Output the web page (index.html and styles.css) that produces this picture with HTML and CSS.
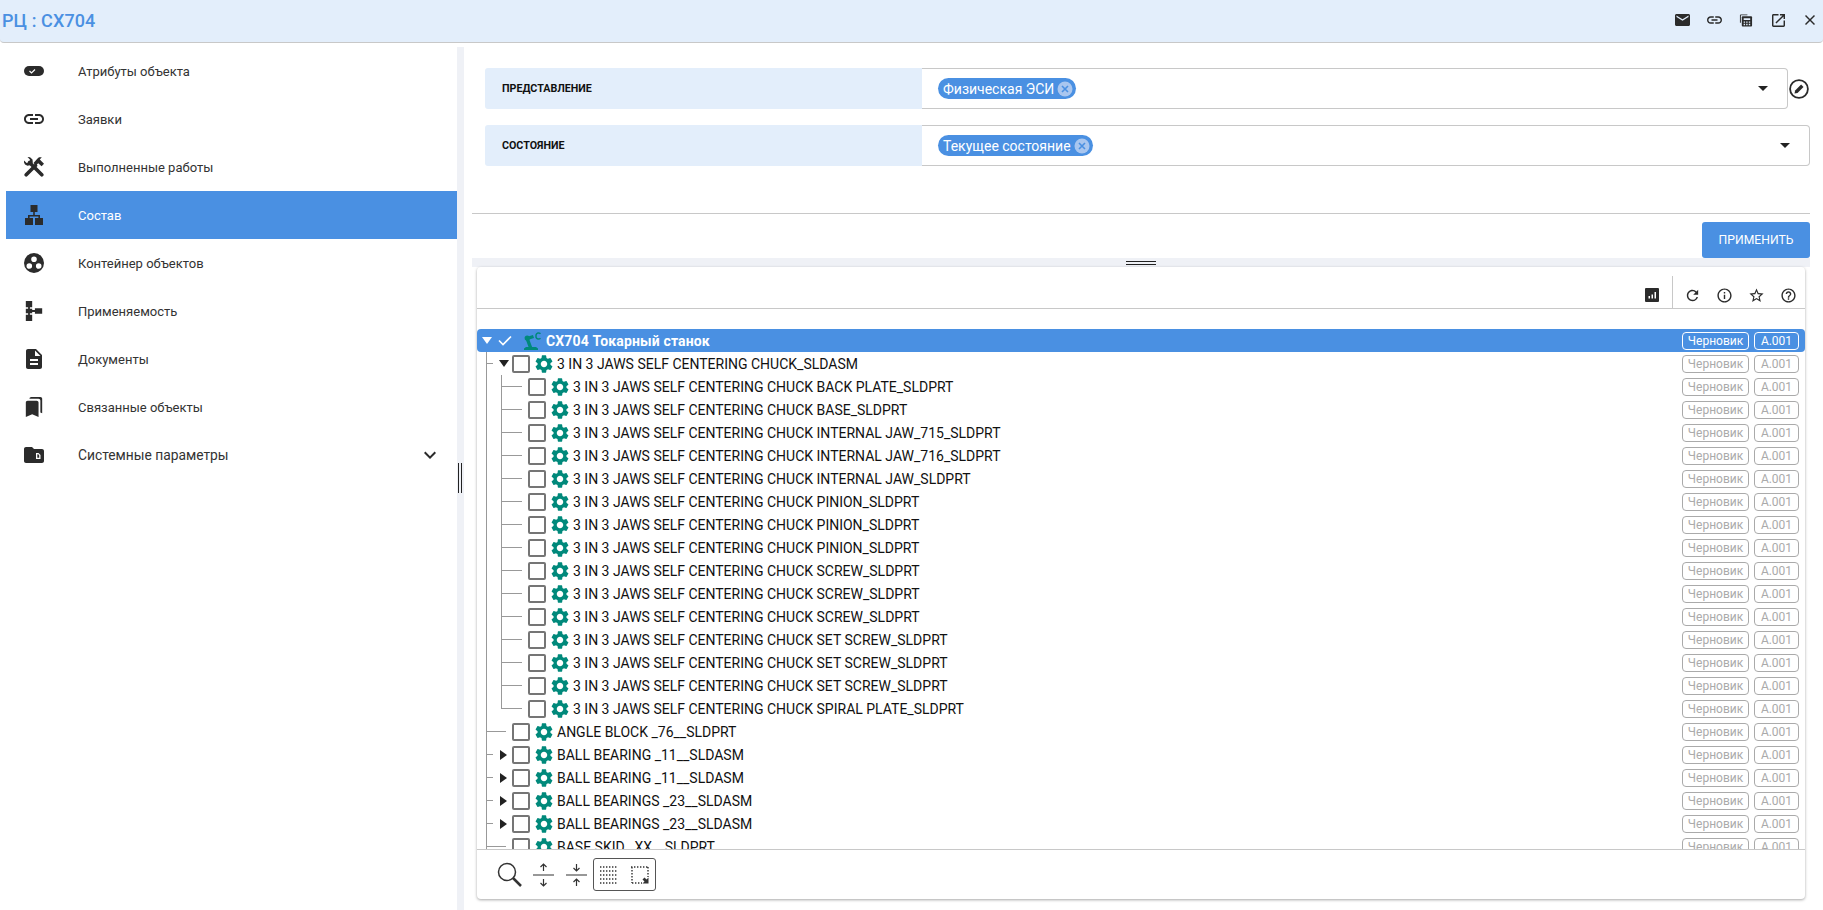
FILE: index.html
```html
<!DOCTYPE html>
<html lang="ru">
<head>
<meta charset="utf-8">
<title>РЦ : CX704</title>
<link rel="stylesheet" href="styles.css">
</head>
<body>
<svg class="defs" width="0" height="0">
<symbol id="gear" viewBox="2 2 20 20"><path d="M19.14 12.94c.04-.3.06-.61.06-.94 0-.32-.02-.64-.07-.94l2.03-1.58a.49.49 0 0 0 .12-.61l-1.92-3.32a.488.488 0 0 0-.59-.22l-2.39.96c-.5-.38-1.03-.7-1.62-.94l-.36-2.54a.484.484 0 0 0-.48-.41h-3.84c-.24 0-.43.17-.47.41l-.36 2.54c-.59.24-1.13.57-1.62.94l-2.39-.96c-.22-.08-.47 0-.59.22L2.74 8.87c-.12.21-.08.47.12.61l2.03 1.58c-.05.3-.09.63-.09.94s.02.64.07.94l-2.03 1.58a.49.49 0 0 0-.12.61l1.92 3.32c.12.22.37.29.59.22l2.39-.96c.5.38 1.03.7 1.62.94l.36 2.54c.05.24.24.41.48.41h3.84c.24 0 .44-.17.47-.41l.36-2.54c.59-.24 1.13-.56 1.62-.94l2.39.96c.22.08.47 0 .59-.22l1.92-3.32c.12-.22.07-.47-.12-.61l-2.01-1.58zM12 15.6c-1.98 0-3.6-1.62-3.6-3.6s1.62-3.6 3.6-3.6 3.6 1.62 3.6 3.6-1.62 3.6-3.6 3.6z"/></symbol>
<symbol id="close-x" viewBox="0 0 16 16"><circle cx="8" cy="8" r="7.5" fill="#a9c6ef"/><path d="M5 5l6 6M11 5l-6 6" stroke="#4a90e2" stroke-width="1.6" fill="none"/></symbol>
</svg>
<header class="topbar">
  <div class="title">РЦ : CX704</div>
  <div class="top-icons">
    <svg class="ti ti-mail" viewBox="2 4 20 16"><path d="M20 4H4c-1.1 0-2 .9-2 2v12c0 1.1.9 2 2 2h16c1.1 0 2-.9 2-2V6c0-1.1-.9-2-2-2zm0 4l-8 5-8-5V6l8 5 8-5v2z"/></svg>
    <svg class="ti ti-link" viewBox="2 7 20 10"><path d="M3.9 12c0-1.71 1.39-3.1 3.1-3.1h4V7H7c-2.76 0-5 2.24-5 5s2.24 5 5 5h4v-1.9H7c-1.71 0-3.1-1.39-3.1-3.1zM8 13h8v-2H8v2zm9-6h-4v1.9h4c1.71 0 3.1 1.39 3.1 3.1s-1.39 3.1-3.1 3.1h-4V17h4c2.76 0 5-2.24 5-5s-2.24-5-5-5z"/></svg>
    <svg class="ti ti-calc" viewBox="0 0 15 14"><path d="M1 10V2a1 1 0 0 1 1-1h7v1H2v8z"/><path d="M4 14a1 1 0 0 1-1-1V4a1 1 0 0 1 1-1h9a1 1 0 0 1 1 1v9a1 1 0 0 1-1 1z"/><path d="M5 5h7v2H5zM5 8.500h1.500V10H5zM7.700 8.500h1.500V10H7.700zM10.500 8.500H12V10h-1.500zM5 11h1.500v1.500H5zM7.700 11h1.500v1.500H7.700zM10.500 11H12v1.500h-1.500z" fill="#e3eefb"/></svg>
    <svg class="ti ti-ext" viewBox="3 3 18 18"><path d="M19 19H5V5h7V3H5c-1.110 0-2 .9-2 2v14c0 1.100.89 2 2 2h14c1.100 0 2-.9 2-2v-7h-2v7zM14 3v2h3.590l-9.830 9.830 1.410 1.410L19 6.410V10h2V3h-7z"/></svg>
    <svg class="ti ti-close" viewBox="5 5 14 14"><path d="M19 6.410L17.590 5 12 10.590 6.410 5 5 6.410 10.590 12 5 17.590 6.410 19 12 13.410 17.590 19 19 17.590 13.410 12z"/></svg>
  </div>
</header>
<main class="layout">
  <aside class="sidebar">
    <nav class="nav">
      <a class="item"><span class="ic"><svg viewBox="0 0 20 10" class="i20"><rect x="0" y="0" width="20" height="10" rx="5"/><path d="M5.500 5l2 2 3.500-3.500" stroke="#fff" stroke-width="1.200" fill="none"/></svg></span><span class="lbl">Атрибуты объекта</span></a>
      <a class="item"><span class="ic"><svg viewBox="2 7 20 10" class="i20"><path d="M3.900 12c0-1.710 1.390-3.100 3.100-3.100h4V7H7c-2.760 0-5 2.240-5 5s2.240 5 5 5h4v-1.900H7c-1.710 0-3.100-1.390-3.100-3.100zM8 13h8v-2H8v2zm9-6h-4v1.900h4c1.710 0 3.100 1.390 3.100 3.100s-1.390 3.100-3.100 3.100h-4V17h4c2.760 0 5-2.240 5-5s-2.240-5-5-5z"/></svg></span><span class="lbl">Заявки</span></a>
      <a class="item"><span class="ic"><svg viewBox="0 0 20 20" class="i20"><path d="M17.800 17.800L5.500 5.500M2.200 17.800L11.500 8.500" fill="none" stroke="#2b2b2b" stroke-width="3.600" stroke-linecap="round"/><path d="M0 3.500L2.700 6.100 4.400 5.800 5.800 4.400 6.100 2.700 3.500 0 6 .2 8.500 2.500 8.800 5.500 7 8 3.500 8.800 1 7.500 0 5.500z"/><path d="M9.500 6L13.300 1.700 15 .2 17.800 .2 15.800 2.600 20 6.800 17.600 9.200 14.200 6.200 11.800 8.600z"/></svg></span><span class="lbl">Выполненные работы</span></a>
      <a class="item active"><span class="ic"><svg viewBox="0 0 18 20" class="i20"><path d="M5.500 0h7v7h-7zM8.200 7h1.600v3H8.200zM3 10h12v3h-1.600v-1.400H4.600V13H3zM0 13h8v7H0zM10 13h8v7h-8z"/></svg></span><span class="lbl">Состав</span></a>
      <a class="item"><span class="ic"><svg viewBox="0 0 20 20" class="i20"><path fill-rule="evenodd" d="M10 0a10 10 0 1 0 0 20a10 10 0 0 0 0-20zM10 3.500a2.800 2.800 0 1 1 0 5.600a2.800 2.800 0 0 1 0-5.600zM5.300 10.200a2.800 2.800 0 1 1 0 5.600a2.800 2.800 0 0 1 0-5.600zM14.700 10.200a2.800 2.800 0 1 1 0 5.600a2.800 2.800 0 0 1 0-5.600z"/></svg></span><span class="lbl">Контейнер объектов</span></a>
      <a class="item"><span class="ic"><svg viewBox="0 0 18 22" class="i20"><path d="M0 0h7v7H0zM0 15h7v7H0zM2.500 7h2v8h-2zM0 8.500h7v5H0zM7 10h3v2H7zM10 8h8v6h-8z"/></svg></span><span class="lbl">Применяемость</span></a>
      <a class="item"><span class="ic"><svg viewBox="4 2 16 20" class="i20"><path d="M14 2H6c-1.100 0-1.990.9-1.990 2L4 20c0 1.100.89 2 1.990 2H18c1.100 0 2-.9 2-2V8l-6-6zm2 16H8v-2h8v2zm0-4H8v-2h8v2zm-3-5V3.500L18.500 9H13z"/></svg></span><span class="lbl">Документы</span></a>
      <a class="item"><span class="ic"><svg viewBox="3 1 18 22" class="i20"><path d="M19 18l2 1V3c0-1.100-.9-2-2-2H8.990C7.890 1 7 1.900 7 3h10c1.100 0 2 .9 2 2v13zM15 5H5c-1.100 0-2 .9-2 2v16l7-3 7 3V7c0-1.100-.9-2-2-2z"/></svg></span><span class="lbl">Связанные объекты</span></a>
      <a class="item"><span class="ic"><svg viewBox="2 4 20 16" class="i20"><path d="M10 4H4c-1.100 0-1.990.9-1.990 2L2 18c0 1.100.9 2 2 2h16c1.100 0 2-.9 2-2V8c0-1.100-.9-2-2-2h-8l-2-2z"/><path fill-rule="evenodd" fill="#fff" d="M14 10h2.500l2 2v4H14zM15.300 11.300v3.400h1.900v-2.300l-.9-1.100z"/></svg></span><span class="lbl lbl-lg">Системные параметры</span><svg class="chev" viewBox="6 8 12 8"><path d="M16.590 8.590L12 13.170 7.410 8.590 6 10l6 6 6-6z"/></svg></a>
    </nav>
    <div class="side-gutter"><span class="v-handle"></span></div>
  </aside>
  <section class="content">
    <div class="form-row">
      <div class="f-label">ПРЕДСТАВЛЕНИЕ</div>
      <div class="f-select"><span class="chip">Физическая ЭСИ<svg class="chip-x"><use href="#close-x"/></svg></span><span class="caret"></span></div>
      <div class="f-side"><svg viewBox="0 0 20 20" class="pencil"><circle cx="10" cy="10" r="8.900" fill="none" stroke="#2b2b2b" stroke-width="1.800"/><path d="M5.500 14.500l.6-3 6-6 2.400 2.400-6 6z"/></svg></div>
    </div>
    <div class="form-row">
      <div class="f-label">СОСТОЯНИЕ</div>
      <div class="f-select"><span class="chip">Текущее состояние<svg class="chip-x"><use href="#close-x"/></svg></span><span class="caret"></span></div>
    </div>
    <hr class="rule">
    <div class="actions"><button class="apply">ПРИМЕНИТЬ</button></div>
    <div class="h-gutter"><span class="h-handle"></span></div>
    <div class="card">
      <div class="toolbar">
        <svg class="tb chart" viewBox="0 0 14 14"><path fill-rule="evenodd" d="M1 0h12a1 1 0 0 1 1 1v12a1 1 0 0 1-1 1H1a1 1 0 0 1-1-1V1a1 1 0 0 1 1-1zM3.500 8v2.500h1.500V8zM6.500 6.500v4H8v-4zM9.500 4v6.500H11V4z"/></svg>
        <span class="tb-sep"></span>
        <svg class="tb" viewBox="0 0 24 24"><path d="M17.650 6.350A7.958 7.958 0 0 0 12 4c-4.420 0-7.990 3.580-7.990 8s3.570 8 7.990 8c3.730 0 6.840-2.550 7.730-6h-2.080A5.990 5.990 0 0 1 12 18c-3.310 0-6-2.690-6-6s2.690-6 6-6c1.660 0 3.140.69 4.220 1.780L13 11h7V4l-2.350 2.350z"/></svg>
        <svg class="tb" viewBox="0 0 24 24"><path d="M11 7h2v2h-2zm0 4h2v6h-2zm1-9C6.480 2 2 6.480 2 12s4.480 10 10 10 10-4.480 10-10S17.520 2 12 2zm0 18c-4.410 0-8-3.590-8-8s3.590-8 8-8 8 3.590 8 8-3.590 8-8 8z"/></svg>
        <svg class="tb" viewBox="0 0 24 24"><path d="M22 9.240l-7.190-.62L12 2 9.190 8.630 2 9.240l5.460 4.730L5.820 21 12 17.270 18.180 21l-1.630-7.030L22 9.240zM12 15.400l-3.760 2.270 1-4.280-3.320-2.880 4.380-.38L12 6.100l1.710 4.040 4.380.38-3.320 2.880 1 4.280L12 15.400z"/></svg>
        <svg class="tb" viewBox="0 0 24 24"><path d="M11 18h2v-2h-2v2zm1-16C6.480 2 2 6.480 2 12s4.480 10 10 10 10-4.480 10-10S17.520 2 12 2zm0 18c-4.410 0-8-3.590-8-8s3.590-8 8-8 8 3.590 8 8-3.590 8-8 8zm0-14c-2.210 0-4 1.790-4 4h2c0-1.100.9-2 2-2s2 .9 2 2c0 2-3 1.750-3 5h2c0-2.250 3-2.500 3-5 0-2.210-1.790-4-4-4z"/></svg>
      </div>
      <div class="tree">
        <div class="row root">
          <span class="tog open white"></span>
          <svg class="chk" viewBox="0 0 14 11"><path d="M1 5.500l4 4 8-8" fill="none" stroke="#fff" stroke-width="1.600"/></svg>
          <svg class="robot" viewBox="0 0 17 18"><path d="M0 18v-1.500l2-1.500h10l2 1.500V18z" fill="#00897b"/><path d="M6.500 15.500L3.200 6.500L9.500 4.500" fill="none" stroke="#00897b" stroke-width="3.400"/><circle cx="3.200" cy="6" r="2.600" fill="#00897b"/><path d="M16.500 1.700a2.700 2.700 0 0 0-4.500 1.300v2.200a2.700 2.700 0 0 0 4.500 1.100" fill="none" stroke="#00897b" stroke-width="1.500"/></svg>
          <span class="name">CX704 Токарный станок</span>
          <span class="badge">Черновик</span><span class="badge ver">А.001</span>
        </div>
        <div class="row"><span class="g1 short"></span><span class="tog open"></span><span class="cb"></span><svg class="gear"><use href="#gear"/></svg><span class="name">3 IN 3 JAWS SELF CENTERING CHUCK_SLDASM</span><span class="badge">Черновик</span><span class="badge ver">А.001</span></div>
        <div class="row"><span class="g0"></span><span class="g2"></span><span class="cb"></span><svg class="gear"><use href="#gear"/></svg><span class="name">3 IN 3 JAWS SELF CENTERING CHUCK BACK PLATE_SLDPRT</span><span class="badge">Черновик</span><span class="badge ver">А.001</span></div>
        <div class="row"><span class="g0"></span><span class="g2"></span><span class="cb"></span><svg class="gear"><use href="#gear"/></svg><span class="name">3 IN 3 JAWS SELF CENTERING CHUCK BASE_SLDPRT</span><span class="badge">Черновик</span><span class="badge ver">А.001</span></div>
        <div class="row"><span class="g0"></span><span class="g2"></span><span class="cb"></span><svg class="gear"><use href="#gear"/></svg><span class="name">3 IN 3 JAWS SELF CENTERING CHUCK INTERNAL JAW_715_SLDPRT</span><span class="badge">Черновик</span><span class="badge ver">А.001</span></div>
        <div class="row"><span class="g0"></span><span class="g2"></span><span class="cb"></span><svg class="gear"><use href="#gear"/></svg><span class="name">3 IN 3 JAWS SELF CENTERING CHUCK INTERNAL JAW_716_SLDPRT</span><span class="badge">Черновик</span><span class="badge ver">А.001</span></div>
        <div class="row"><span class="g0"></span><span class="g2"></span><span class="cb"></span><svg class="gear"><use href="#gear"/></svg><span class="name">3 IN 3 JAWS SELF CENTERING CHUCK INTERNAL JAW_SLDPRT</span><span class="badge">Черновик</span><span class="badge ver">А.001</span></div>
        <div class="row"><span class="g0"></span><span class="g2"></span><span class="cb"></span><svg class="gear"><use href="#gear"/></svg><span class="name">3 IN 3 JAWS SELF CENTERING CHUCK PINION_SLDPRT</span><span class="badge">Черновик</span><span class="badge ver">А.001</span></div>
        <div class="row"><span class="g0"></span><span class="g2"></span><span class="cb"></span><svg class="gear"><use href="#gear"/></svg><span class="name">3 IN 3 JAWS SELF CENTERING CHUCK PINION_SLDPRT</span><span class="badge">Черновик</span><span class="badge ver">А.001</span></div>
        <div class="row"><span class="g0"></span><span class="g2"></span><span class="cb"></span><svg class="gear"><use href="#gear"/></svg><span class="name">3 IN 3 JAWS SELF CENTERING CHUCK PINION_SLDPRT</span><span class="badge">Черновик</span><span class="badge ver">А.001</span></div>
        <div class="row"><span class="g0"></span><span class="g2"></span><span class="cb"></span><svg class="gear"><use href="#gear"/></svg><span class="name">3 IN 3 JAWS SELF CENTERING CHUCK SCREW_SLDPRT</span><span class="badge">Черновик</span><span class="badge ver">А.001</span></div>
        <div class="row"><span class="g0"></span><span class="g2"></span><span class="cb"></span><svg class="gear"><use href="#gear"/></svg><span class="name">3 IN 3 JAWS SELF CENTERING CHUCK SCREW_SLDPRT</span><span class="badge">Черновик</span><span class="badge ver">А.001</span></div>
        <div class="row"><span class="g0"></span><span class="g2"></span><span class="cb"></span><svg class="gear"><use href="#gear"/></svg><span class="name">3 IN 3 JAWS SELF CENTERING CHUCK SCREW_SLDPRT</span><span class="badge">Черновик</span><span class="badge ver">А.001</span></div>
        <div class="row"><span class="g0"></span><span class="g2"></span><span class="cb"></span><svg class="gear"><use href="#gear"/></svg><span class="name">3 IN 3 JAWS SELF CENTERING CHUCK SET SCREW_SLDPRT</span><span class="badge">Черновик</span><span class="badge ver">А.001</span></div>
        <div class="row"><span class="g0"></span><span class="g2"></span><span class="cb"></span><svg class="gear"><use href="#gear"/></svg><span class="name">3 IN 3 JAWS SELF CENTERING CHUCK SET SCREW_SLDPRT</span><span class="badge">Черновик</span><span class="badge ver">А.001</span></div>
        <div class="row"><span class="g0"></span><span class="g2"></span><span class="cb"></span><svg class="gear"><use href="#gear"/></svg><span class="name">3 IN 3 JAWS SELF CENTERING CHUCK SET SCREW_SLDPRT</span><span class="badge">Черновик</span><span class="badge ver">А.001</span></div>
        <div class="row"><span class="g0"></span><span class="g2 last"></span><span class="cb"></span><svg class="gear"><use href="#gear"/></svg><span class="name">3 IN 3 JAWS SELF CENTERING CHUCK SPIRAL PLATE_SLDPRT</span><span class="badge">Черновик</span><span class="badge ver">А.001</span></div>
        <div class="row"><span class="g1 long"></span><span class="cb"></span><svg class="gear"><use href="#gear"/></svg><span class="name">ANGLE BLOCK _76__SLDPRT</span><span class="badge">Черновик</span><span class="badge ver">А.001</span></div>
        <div class="row"><span class="g1 short"></span><span class="tog"></span><span class="cb"></span><svg class="gear"><use href="#gear"/></svg><span class="name">BALL BEARING _11__SLDASM</span><span class="badge">Черновик</span><span class="badge ver">А.001</span></div>
        <div class="row"><span class="g1 short"></span><span class="tog"></span><span class="cb"></span><svg class="gear"><use href="#gear"/></svg><span class="name">BALL BEARING _11__SLDASM</span><span class="badge">Черновик</span><span class="badge ver">А.001</span></div>
        <div class="row"><span class="g1 short"></span><span class="tog"></span><span class="cb"></span><svg class="gear"><use href="#gear"/></svg><span class="name">BALL BEARINGS _23__SLDASM</span><span class="badge">Черновик</span><span class="badge ver">А.001</span></div>
        <div class="row"><span class="g1 short"></span><span class="tog"></span><span class="cb"></span><svg class="gear"><use href="#gear"/></svg><span class="name">BALL BEARINGS _23__SLDASM</span><span class="badge">Черновик</span><span class="badge ver">А.001</span></div>
        <div class="row"><span class="g1 long"></span><span class="cb"></span><svg class="gear"><use href="#gear"/></svg><span class="name">BASE SKID _XX__SLDPRT</span><span class="badge">Черновик</span><span class="badge ver">А.001</span></div>
      </div>
      <div class="footer">
        <svg class="f-search" viewBox="0 0 25 25"><circle cx="10" cy="10" r="8.500" fill="none" stroke="#333" stroke-width="1.500"/><path d="M16 16l8 8" stroke="#333" stroke-width="2.500"/></svg>
        <svg class="f-arrows" viewBox="0 0 21 24"><path d="M0 12h21M10.500 1v7M10.500 16v7M7.500 4l3-3 3 3M7.500 20l3 3 3-3" fill="none" stroke="#333" stroke-width="1.200"/></svg>
        <svg class="f-arrows" viewBox="0 0 21 24"><path d="M0 12h21M10.500 1v7M10.500 16v7M7.500 5l3 3 3-3M7.500 19l3-3 3 3" fill="none" stroke="#333" stroke-width="1.200"/></svg>
        <div class="f-box">
          <svg class="f-sel" viewBox="0 0 18 18"><path d="M0 1h18M0 5h18M0 9h18M0 13h18M0 17h18" fill="none" stroke="#333" stroke-width="1.400" stroke-dasharray="1.400 1.600"/></svg>
          <svg class="f-sel" viewBox="0 0 18 18"><path d="M0 1h18M17 1v10M1 1v16M1 17h10" fill="none" stroke="#333" stroke-width="1.400" stroke-dasharray="1.400 1.600"/><path d="M17.500 11.500v6h-6l2-2-2-2 2-2 2 2z" fill="#333"/></svg>
        </div>
      </div>
    </div>
  </section>
</main>
</body>
</html>
```
FILE: styles.css
```css
* { box-sizing: border-box; }
html, body { margin: 0; height: 100%; overflow: hidden; }
body { width: 1823px; height: 910px; background: #fff; font-family: Roboto, "Liberation Sans", sans-serif; color: #333; display: flex; flex-direction: column; }
.defs { position: absolute; }

.topbar { height: 43px; flex: none; background: #e3eefb; border-bottom: 1px solid #c8c8c8; border-radius: 0 0 4px 4px; display: flex; align-items: center; justify-content: space-between; padding: 0 8px 2px 2px; }
.title { font-size: 18px; font-weight: 500; color: #4a90e2; letter-spacing: .1px; }
.top-icons { display: flex; align-items: center; }
.ti { fill: #2b2b2b; display: block; flex: none; }
.ti-mail { width: 15px; height: 12px; margin-right: 17px; }
.ti-link { width: 15px; height: 8px; margin-right: 17px; }
.ti-calc { width: 14px; height: 14px; margin-right: 19px; }
.ti-ext { width: 13px; height: 13px; margin-right: 20px; }
.ti-close { width: 10px; height: 10px; }

.layout { flex: 1; display: flex; min-height: 0; }
.sidebar { width: 464px; flex: none; display: flex; padding-left: 6px; position: relative; }
.nav { width: 451px; flex: none; padding-top: 4px; }
.item { display: flex; align-items: center; height: 48px; color: #333; }
.item.active { background: #4a90e2; color: #fff; }
.ic { width: 72px; flex: none; display: flex; padding-left: 18px; }
.i20 { width: 20px; height: 20px; fill: #2b2b2b; display: block; }
.lbl { font-size: 13px; flex: 1; }
.lbl-lg { font-size: 13.8px; }
.chev { width: 12px; height: 8px; fill: #2b2b2b; margin-right: 21px; }
.side-gutter { width: 7px; margin-top: 4px; background: #eff1f6; position: relative; }
.v-handle { position: absolute; left: 1px; top: 416px; width: 4px; height: 30px; border-left: 1px solid #222; border-right: 1px solid #222; }

.content { flex: 1; min-width: 0; padding: 25px 13px 11px 8px; display: flex; flex-direction: column; }
.form-row { display: flex; height: 41px; margin-bottom: 16px; padding-left: 13px; flex: none; }
.form-row + .form-row { margin-bottom: 0; }
.f-label { width: 437px; flex: none; background: #e3eefb; border-radius: 3px 0 0 3px; display: flex; align-items: center; padding-left: 17px; font-size: 10.7px; font-weight: 700; color: #111; }
.f-select { flex: 1; border: 1px solid #c8c8c8; border-left: 0; border-radius: 0 4px 4px 0; display: flex; align-items: center; justify-content: space-between; padding: 0 19px 0 16px; }
.chip { height: 21px; background: #4a90e2; color: #fff; border-radius: 11px; display: inline-flex; align-items: center; font-size: 14px; padding: 0 3px 0 5px; gap: 3px; }
.chip-x { width: 16px; height: 16px; }
.caret { width: 0; height: 0; border-left: 5px solid transparent; border-right: 5px solid transparent; border-top: 5px solid #222; }
.f-side { width: 22px; flex: none; display: flex; align-items: center; justify-content: flex-end; padding-right: 1px; }
.pencil { width: 20px; height: 20px; fill: #2b2b2b; display: block; }
.rule { margin: 47px 0 0; border: 0; border-top: 1px solid #c8c8c8; flex: none; }
.actions { display: flex; justify-content: flex-end; padding-top: 8px; flex: none; }
.apply { width: 108px; height: 36px; background: #4a90e2; color: #fff; border: 0; border-radius: 3px; font: 400 12.2px Roboto, sans-serif; }
.h-gutter { height: 9px; background: #eff1f6; flex: none; display: flex; align-items: center; justify-content: center; }
.h-handle { width: 30px; height: 4px; border-top: 1px solid #222; border-bottom: 1px solid #222; }

.card { flex: 1; min-height: 0; margin: 0 5px; background: #fff; border-radius: 4px; box-shadow: 0 1px 3px rgba(0,0,0,.35); display: flex; flex-direction: column; }
.toolbar { height: 42px; flex: none; border-bottom: 1px solid #c8c8c8; display: flex; align-items: flex-end; justify-content: flex-end; padding: 9px 8px 0 0; gap: 15px; }
.tb { width: 17px; height: 17px; fill: #2b2b2b; margin-bottom: 4px; flex: none; }
.tb.chart { width: 14px; height: 14px; margin-bottom: 6px; }
.tb-sep { width: 1px; height: 32px; background: #c8c8c8; margin: 0 -4px 0 -2px; }

.tree { flex: 1; min-height: 0; overflow: hidden; padding-top: 20px; }
.row { height: 23px; display: flex; align-items: center; font-size: 14px; color: #111; padding-right: 6px; }
.row.root { background: #4a90e2; color: #fff; font-weight: 700; letter-spacing: .15px; border-radius: 4px; padding-left: 4px; }
.row.root .badge { color: #fff; border-color: #fff; font-weight: 400; letter-spacing: 0; }
.name { flex: 1; white-space: nowrap; }
.badge { height: 18px; width: 67px; flex: none; border: 1px solid #aaa; border-radius: 4px; color: #aaa; font-size: 12px; display: flex; align-items: center; justify-content: center; }
.badge.ver { width: 45px; margin-left: 5px; }
.g0, .g1, .g2 { height: 23px; flex: none; display: block; background-repeat: no-repeat; }
.g0 { width: 15px; margin-left: 9px; background: linear-gradient(#999, #999) 0 0 / 1px 100% no-repeat; }
.g1 { margin-left: 9px; background-image: linear-gradient(#999, #999), linear-gradient(#999, #999); background-size: 1px 100%, 100% 1px; background-position: 0 0, 0 50%; }
.g1.short { width: 7px; margin-right: 2px; }
.g1.long { width: 20px; margin-right: 6px; }
.g2 { width: 21px; margin-right: 6px; background-image: linear-gradient(#999, #999), linear-gradient(#999, #999); background-size: 1px 100%, 100% 1px; background-position: 0 0, 0 50%; }
.g2.last { background-size: 1px 50%, 100% 1px; }
.tog { width: 17px; flex: none; display: flex; align-items: center; justify-content: center; }
.tog::before { content: ""; width: 0; height: 0; border-top: 5px solid transparent; border-bottom: 5px solid transparent; border-left: 7px solid #222; }
.tog.open::before { border-left: 5px solid transparent; border-right: 5px solid transparent; border-top: 7px solid #222; border-bottom: 0; }
.tog.white { width: 12px; }
.tog.white::before { border-top-color: #fff; }
.chk { width: 14px; height: 11px; margin: 0 12px 0 5px; flex: none; }
.robot { width: 17px; height: 18px; margin-right: 5px; flex: none; }
.cb { width: 18px; height: 18px; flex: none; border: 2px solid #757575; border-radius: 2px; background: #fff; margin-right: 5px; }
.gear { width: 18px; height: 18px; fill: #00897b; flex: none; margin-right: 4px; }

.footer { height: 50px; flex: none; border-top: 1px solid #c8c8c8; display: flex; align-items: center; padding-left: 20px; }
.f-search { width: 25px; height: 25px; margin-right: 11px; flex: none; }
.f-arrows { width: 21px; height: 24px; margin-right: 12px; flex: none; }
.f-box { width: 63px; height: 33px; border: 1px solid #555; border-radius: 3px; display: flex; align-items: center; justify-content: space-between; padding: 0 6px; margin-left: -6px; }
.f-sel { width: 18px; height: 18px; flex: none; }
```
